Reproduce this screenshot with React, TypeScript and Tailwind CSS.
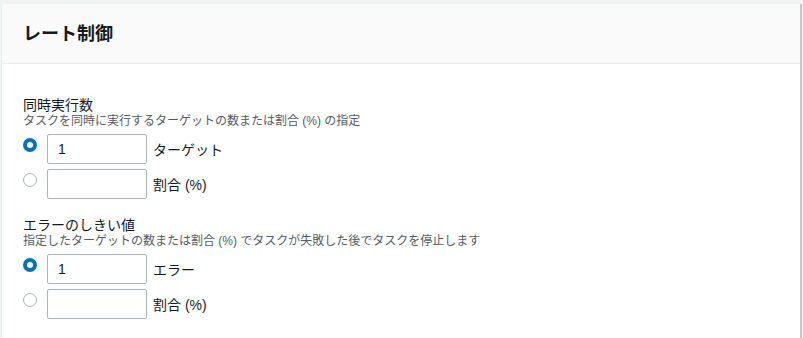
import { useState } from 'react'

const FONT = '"Liberation Sans", "Noto Sans CJK JP", sans-serif'

type Option = { value: string; suffix: string; defaultValue: string }

function Radio({ checked, onClick }: { checked: boolean; onClick: () => void }) {
  return (
    <button
      type="button"
      onClick={onClick}
      className={
        checked
          ? 'mt-[4px] size-[14px] shrink-0 rounded-full border-[4px] border-[#0073bb] bg-white'
          : 'mt-[4px] size-[14px] shrink-0 rounded-full border border-[#aab7b8] bg-white'
      }
    />
  )
}

function RadioGroup({ title, desc, options }: { title: string; desc: string; options: Option[] }) {
  const [selected, setSelected] = useState(0)
  return (
    <div>
      <div className="text-[14px] leading-[18px] text-[#16191f]">{title}</div>
      <div className="text-[12px] leading-[15px] text-[#545b64]">{desc}</div>
      <div className="mt-[5px] flex flex-col gap-[5px]">
        {options.map((o, i) => (
          <div key={i} className="flex items-start">
            <div className="flex w-[24px] justify-start">
              <Radio checked={selected === i} onClick={() => setSelected(i)} />
            </div>
            <input
              defaultValue={o.defaultValue}
              className="h-[30px] w-[100px] rounded-[2px] border border-[#aab7b8] px-[10px] text-[14px] text-[#16191f] outline-none"
              style={{ fontFamily: FONT }}
            />
            <span className="ml-[6px] mt-[5px] text-[14px] leading-[22px] text-[#16191f]">{o.suffix}</span>
          </div>
        ))}
      </div>
    </div>
  )
}

export default function App() {
  return (
    <div className="h-[338px] w-[803px] overflow-hidden bg-[#f2f3f3] pt-[4px] pl-[1px]" style={{ fontFamily: FONT }}>
      <div className="h-[340px] w-[801px] border-l border-r-2 border-l-[#eaeded] border-r-[#c8c8c8] bg-white">
        <div className="flex h-[60px] items-center border-b border-[#eaeded] bg-[#fafafa] px-[21px]">
          <h2 className="text-[18px] font-bold leading-[22px] text-[#16191f]">レート制御</h2>
        </div>
        <div className="flex flex-col gap-[17px] px-[21px] pt-[32px]">
          <RadioGroup
            title="同時実行数"
            desc="タスクを同時に実行するターゲットの数または割合 (%) の指定"
            options={[
              { value: 'targets', suffix: 'ターゲット', defaultValue: '1' },
              { value: 'percent', suffix: '割合 (%)', defaultValue: '' },
            ]}
          />
          <RadioGroup
            title="エラーのしきい値"
            desc="指定したターゲットの数または割合 (%) でタスクが失敗した後でタスクを停止します"
            options={[
              { value: 'errors', suffix: 'エラー', defaultValue: '1' },
              { value: 'percent', suffix: '割合 (%)', defaultValue: '' },
            ]}
          />
        </div>
      </div>
    </div>
  )
}
